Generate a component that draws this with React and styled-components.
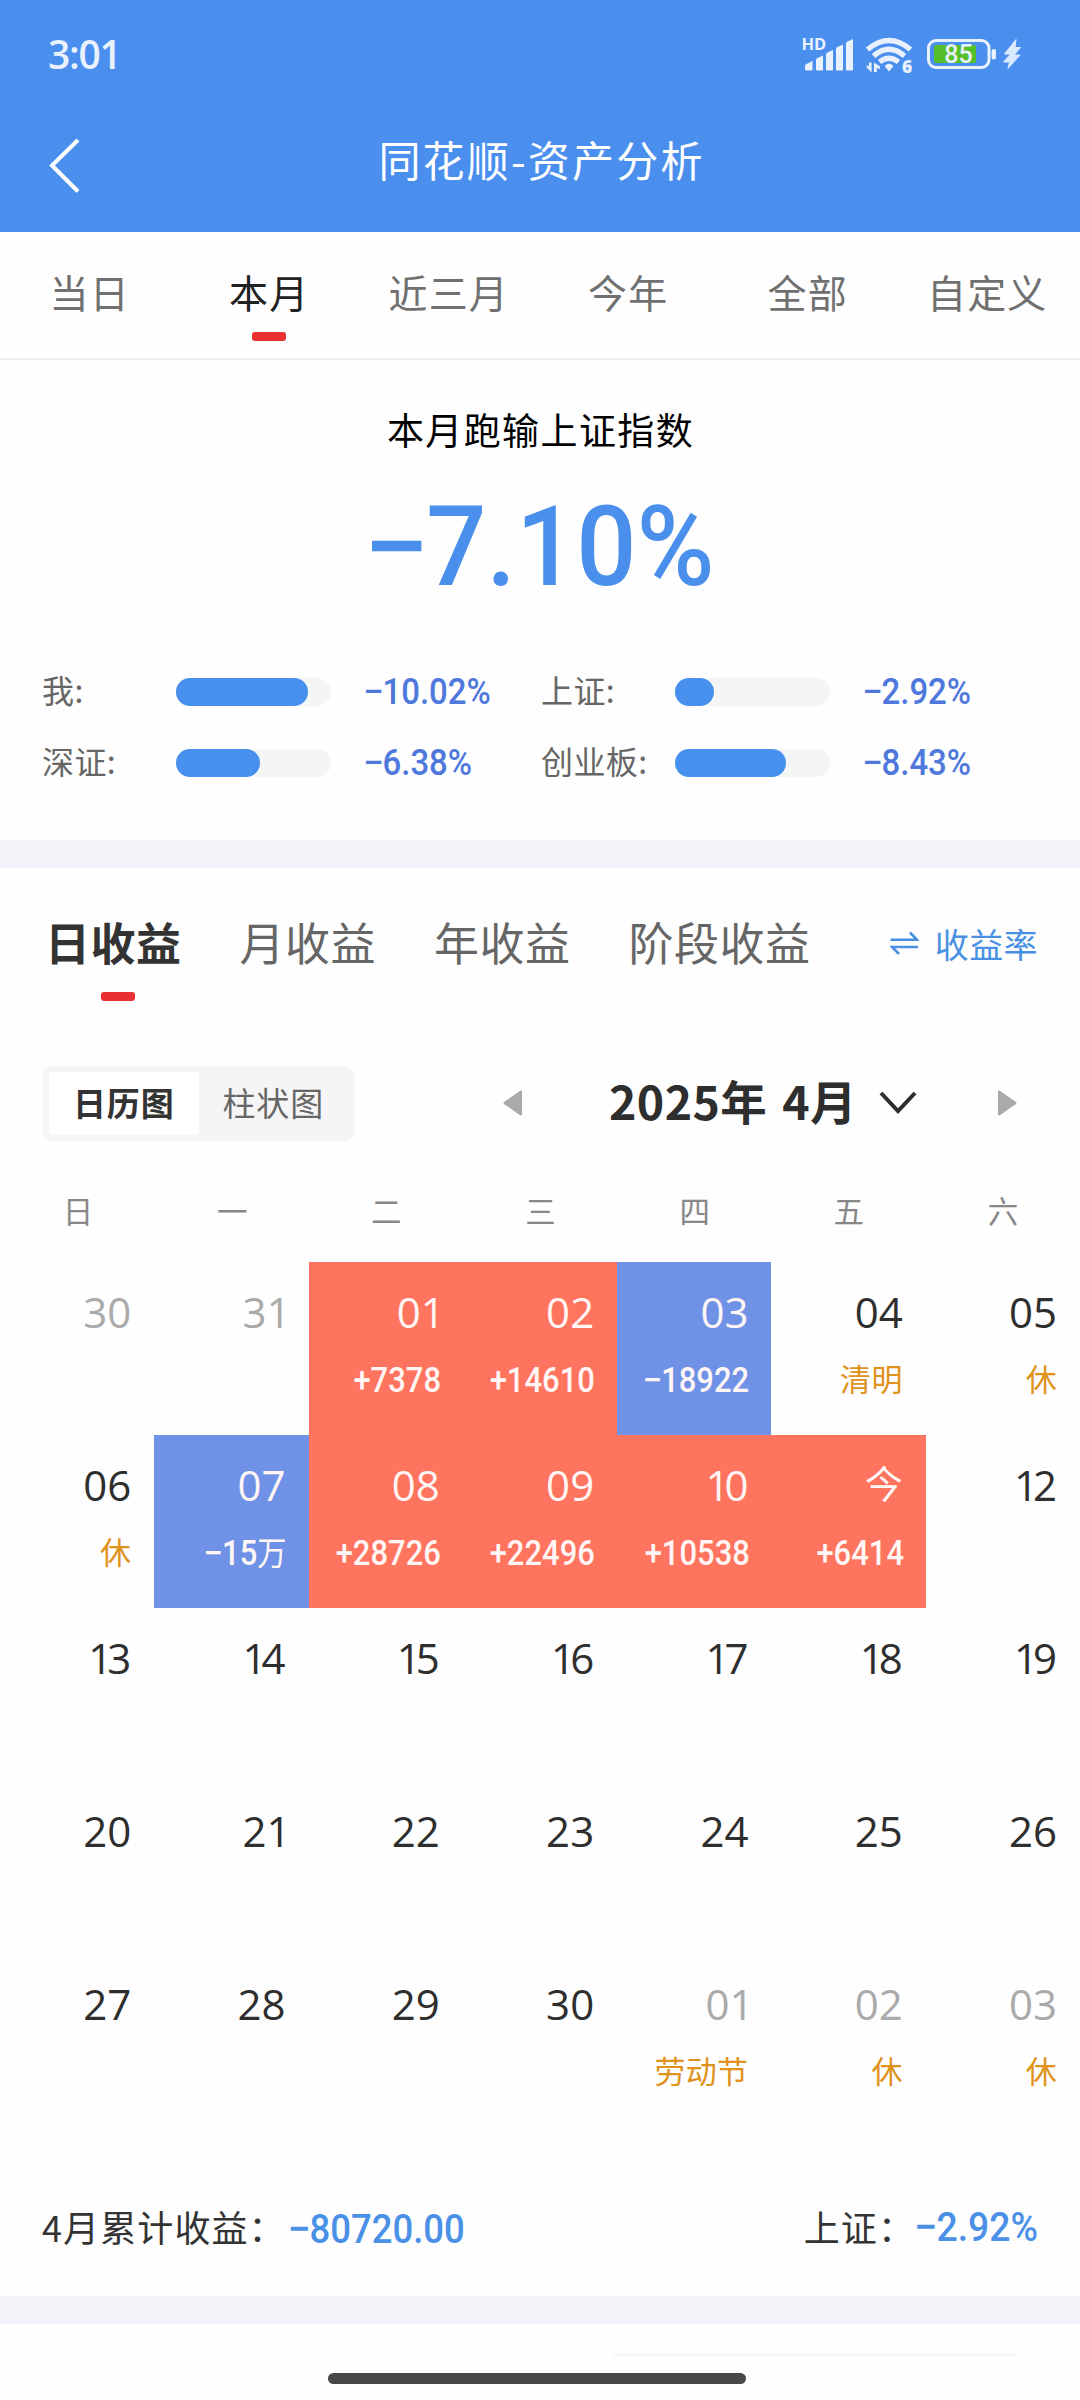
import React, { useState } from 'react';
import styled, { createGlobalStyle } from 'styled-components';

const RANGES = ['当日', '本月', '近三月', '今年', '全部', '自定义'];

const COMPARE = [
  { label: '我:', value: '−10.02%', fill: 132 },
  { label: '上证:', value: '−2.92%', fill: 39 },
  { label: '深证:', value: '−6.38%', fill: 84 },
  { label: '创业板:', value: '−8.43%', fill: 111 },
];

const PROFIT_TABS = ['日收益', '月收益', '年收益', '阶段收益'];
const WEEKDAYS = ['日', '一', '二', '三', '四', '五', '六'];

const DAYS = [
  { day: '30', muted: true },
  { day: '31', muted: true },
  { day: '01', profit: '+7378' },
  { day: '02', profit: '+14610' },
  { day: '03', profit: '−18922' },
  { day: '04', holiday: '清明' },
  { day: '05', holiday: '休' },
  { day: '06', holiday: '休' },
  { day: '07', profit: '−15', unit: '万' },
  { day: '08', profit: '+28726' },
  { day: '09', profit: '+22496' },
  { day: '10', profit: '+10538' },
  { day: '今', profit: '+6414', today: true },
  { day: '12' },
  { day: '13' },
  { day: '14' },
  { day: '15' },
  { day: '16' },
  { day: '17' },
  { day: '18' },
  { day: '19' },
  { day: '20' },
  { day: '21' },
  { day: '22' },
  { day: '23' },
  { day: '24' },
  { day: '25' },
  { day: '26' },
  { day: '27' },
  { day: '28' },
  { day: '29' },
  { day: '30' },
  { day: '01', muted: true, holiday: '劳动节' },
  { day: '02', muted: true, holiday: '休' },
  { day: '03', muted: true, holiday: '休' },
];

function StatusIcons() {
  return (
    <svg width="224" height="60" viewBox="800 26 224 60" fill="#e8f1fd">
      <text x="801.5" y="50" fontFamily="Open Sans, sans-serif" fontWeight="700" fontSize="16.5">HD</text>
      {/* SIGNAL */}
      <path d="M805 66 Q805 64.500 806.500 64 L812.500 61 V69.500 Q812.500 70.500 811.500 70.500 H806 Q805 70.500 805 69.500 Z" />
      <path d="M816 60 Q816 58.500 817.500 58 L823 55.500 V69.500 Q823 70.500 822 70.500 H817 Q816 70.500 816 69.500 Z" />
      <path d="M826 54.500 Q826 53 827.500 52.500 L833 50 V69.500 Q833 70.500 832 70.500 H827 Q826 70.500 826 69.500 Z" />
      <path d="M836 49 Q836 47.500 837.500 47 L843 44.500 V69.500 Q843 70.500 842 70.500 H837 Q836 70.500 836 69.500 Z" />
      <path d="M846 43.500 Q846 42 847.500 41.500 L853 39 V69.500 Q853 70.500 852 70.500 H847 Q846 70.500 846 69.500 Z" />
      {/* WIFI */}
      <g fill="none" stroke="#e8f1fd" strokeWidth="5.200">
        <path d="M867.500 49.500 Q889 31.500 910.500 49.500" />
        <path d="M873.500 56 Q889 42.500 904.500 56" />
        <path d="M879.500 62 Q889 54.500 898.500 62" />
      </g>
      <path d="M884.500 66 Q889 61.500 893.500 66 L889 71.500 Z" />
      <path d="M869 62.500 h2.600 v10 l-5 -5 v-2.500 l2.400 1.500 z" />
      <path d="M874 72 v-9.500 l6 4 v2.500 l-3.200 -1 v4 z" />
      <text x="902" y="72.500" fontFamily="Open Sans, sans-serif" fontWeight="800" fontSize="17.5">6</text>
      {/* BATTERY */}
      <rect x="928.500" y="40.500" width="60.500" height="27" rx="7.500" fill="none" stroke="#e8f1fd" strokeWidth="3" />
      <rect x="934" y="45" width="42" height="18" rx="2" fill="#55bf2b" />
      <rect x="991.600" y="49" width="4.400" height="10.500" rx="2" />
      <text x="958.500" y="63" textAnchor="middle" fontFamily="Roboto, sans-serif" fontWeight="500" fontSize="25">85</text>
      <path
        d="M1016 39.500 L1004.500 54 H1010.500 L1003.500 62 H1009.500 L1008 68.500 L1020 55 H1014 L1020.500 47.500 H1015 Z"
        fill="#d9e9ff"
        stroke="#d9e9ff"
        strokeWidth="1"
      />
    </svg>
  );
}

// SPLITS THE LEADING MINUS OFF SO IT CAN BE DRAWN WIDER THAN THE DIGITS
function Figure({ text }) {
  if (text[0] !== '−') return text;
  return (
    <>
      <Minus>−</Minus>
      {text.slice(1)}
    </>
  );
}

function App() {
  const [range, setRange] = useState('本月');
  const [tab, setTab] = useState('日收益');

  return (
    <>
      <GlobalStyle />
      <Phone>
        <Header>
          <StatusBar>
            <Clock>3:01</Clock>
            <StatusIcons />
          </StatusBar>
          <TitleBar>
            <BackButton>
              <svg width="32" height="56" viewBox="0 0 32 56" fill="none" stroke="#fff" strokeWidth="4">
                <path d="M30 2 L4 27.500 L30 53.500" />
              </svg>
            </BackButton>
            <Title>同花顺-资产分析</Title>
          </TitleBar>
        </Header>

        <RangeTabs>
          {RANGES.map((name) => (
            <RangeTab key={name} $active={name === range} onClick={() => setRange(name)}>
              {name}
            </RangeTab>
          ))}
        </RangeTabs>

        <Summary>
          <SummaryTitle>本月跑输上证指数</SummaryTitle>
          <SummaryValue>
            <Figure text="−7.10%" />
          </SummaryValue>
          <CompareGrid>
            {COMPARE.map((item) => (
              <CompareItem key={item.label}>
                <CompareLabel>{item.label}</CompareLabel>
                <Track>
                  <Fill style={{ width: item.fill }} />
                </Track>
                <CompareValue>
                  <Figure text={item.value} />
                </CompareValue>
              </CompareItem>
            ))}
          </CompareGrid>
        </Summary>

        <Divider />

        <ProfitTabs>
          {PROFIT_TABS.map((name) => (
            <ProfitTab key={name} $active={name === tab} onClick={() => setTab(name)}>
              {name}
            </ProfitTab>
          ))}
          <RateSwitch>
            <svg width="29" height="24" viewBox="0 0 29 24" fill="none" stroke="#4a90e2" strokeWidth="2.600">
              <path d="M0.500 8.800 H27 L20 1.500" />
              <path d="M28 16 H2 L9 23" />
            </svg>
            收益率
          </RateSwitch>
        </ProfitTabs>

        <Toolbar>
          <ChartToggle>
            <ToggleOption $active>日历图</ToggleOption>
            <ToggleOption>柱状图</ToggleOption>
          </ChartToggle>
          <MonthPicker>
            <svg width="19" height="26" viewBox="0 0 19 26">
              <path d="M17.500 0.500 Q19 0 19 2 V24 Q19 26 17.500 25.500 L1 14 Q0 13 1 12 Z" fill="#aaa" />
            </svg>
            <Month>
              <MonthText>2025年 4月</MonthText>
              <svg width="38" height="24" viewBox="0 0 38 24" fill="none" stroke="#2e2e2e" strokeWidth="4">
                <path d="M2 2 L19 20 L36 2" />
              </svg>
            </Month>
            <svg width="19" height="26" viewBox="0 0 19 26">
              <path d="M1.500 0.500 Q0 0 0 2 V24 Q0 26 1.500 25.500 L18 14 Q19 13 18 12 Z" fill="#aaa" />
            </svg>
          </MonthPicker>
        </Toolbar>

        <Weekdays>
          {WEEKDAYS.map((name) => (
            <span key={name}>{name}</span>
          ))}
        </Weekdays>

        <Calendar>
          {DAYS.map((item, i) => (
            <Day key={i} $profit={item.profit} $muted={item.muted}>
              <DayNumber $today={item.today}>
                {item.day.split('').map((c, n) => (c === '1' ? <One key={n}>1</One> : c))}
              </DayNumber>
              {item.profit && (
                <Profit>
                  <Figure text={item.profit} />
                  {item.unit && <Unit>{item.unit}</Unit>}
                </Profit>
              )}
              {item.holiday && <Holiday>{item.holiday}</Holiday>}
            </Day>
          ))}
        </Calendar>

        <Totals>
          <TotalLabel>4月累计收益：</TotalLabel>
          <TotalValue>
            <Figure text="−80720.00" />
          </TotalValue>
          <Spacer />
          <TotalLabel>上证：</TotalLabel>
          <TotalValue $right>
            <Figure text="−2.92%" />
          </TotalValue>
        </Totals>

        <Divider />

        <BottomArea>
          <NextToggle />
          <HomeBar />
        </BottomArea>
      </Phone>
    </>
  );
}

const GlobalStyle = createGlobalStyle`
  * {
    box-sizing: border-box;
  }

  body {
    margin: 0;
    background: #fff;
    font-family: 'Noto Sans CJK SC', 'Noto Sans', sans-serif;
  }

  svg {
    display: block;
    flex: none;
  }
`;

const Phone = styled.div`
  width: 1080px;
  height: 2400px;
  overflow: hidden;
  background: #fefefe;
  color: #333;
`;

const Header = styled.header`
  height: 232px;
  background: #4a8fee;
  color: #fff;
`;

const StatusBar = styled.div`
  display: flex;
  align-items: center;
  justify-content: space-between;
  height: 112px;
  padding: 0 56px 0 48px;
`;

const Clock = styled.span`
  margin-top: -4px;
  font-family: 'Open Sans', sans-serif;
  font-size: 39px;
  font-weight: 600;
  letter-spacing: -1.3px;
  line-height: 48px;
  color: #e8f1fd;
`;

const TitleBar = styled.div`
  display: grid;
  grid-template-columns: 100px 1fr 100px;
  height: 120px;
`;

const BackButton = styled.div`
  padding: 26px 0 0 48px;
`;

const Title = styled.h1`
  margin: 0;
  padding: 15px 0 0 3px;
  text-align: center;
  font-size: 42px;
  font-weight: 400;
  letter-spacing: 2.2px;
  line-height: 64px;
`;

const RangeTabs = styled.nav`
  display: grid;
  grid-template-columns: repeat(6, 1fr);
  height: 128px;
  padding-right: 3px;
  border-bottom: 2px solid #f0f0f0;
`;

const RangeTab = styled.div`
  display: flex;
  flex-direction: column;
  align-items: center;
  padding-top: 29px;
  font-size: 39px;
  letter-spacing: 1.2px;
  line-height: 60px;
  color: ${(p) => (p.$active ? '#222' : '#707070')};

  &::after {
    content: '';
    width: 34px;
    height: 9px;
    margin-top: 11px;
    border-radius: 3px;
    background: ${(p) => (p.$active ? '#e83030' : 'transparent')};
  }
`;

const Summary = styled.section`
  height: 480px;
  padding: 41px 41px 0 42px;
`;

const SummaryTitle = styled.div`
  text-align: center;
  font-size: 37px;
  letter-spacing: 1.4px;
  line-height: 56px;
  color: #000;
`;

const Minus = styled.span`
  display: inline-block;
  transform: scaleX(1.12);
`;

const SummaryValue = styled.div`
  margin-top: 35px;
  text-align: center;
  font-family: Roboto, sans-serif;
  font-size: 111px;
  font-weight: 500;
  line-height: 110px;
  color: #4a8feb;
  transform: scaleX(0.955);
`;

const CompareGrid = styled.div`
  display: grid;
  grid-template-columns: 499px 1fr;
  grid-auto-rows: 71px;
  margin-top: 55px;
`;

const CompareItem = styled.div`
  display: flex;
  align-items: center;
  height: 70px;
`;

const CompareLabel = styled.span`
  width: 134px;
  margin-top: -6px;
  font-size: 32px;
  letter-spacing: 0.4px;
  line-height: 48px;
  white-space: nowrap;
  color: #666;
`;

const Track = styled.div`
  flex: none;
  width: 155px;
  height: 28px;
  border-radius: 14px;
  background: #f4f6f6;
`;

const Fill = styled.div`
  height: 28px;
  border-radius: 14px;
  background: #4790ee;
`;

const CompareValue = styled.span`
  margin-left: 33px;
  font-family: Roboto, sans-serif;
  font-size: 36px;
  font-weight: 500;
  line-height: 40px;
  color: #4f78dc;
  transform: scaleX(0.915);
  transform-origin: left;
`;

const Divider = styled.div`
  height: 28px;
  background: #f2f3f8;
`;

const ProfitTabs = styled.nav`
  display: flex;
  height: 159px;
  padding: 42px 43px 0 45px;
`;

const ProfitTab = styled.div`
  display: flex;
  flex-direction: column;
  align-items: center;
  margin-right: 58px;
  font-size: 45px;
  letter-spacing: 0.5px;
  line-height: 64px;
  white-space: nowrap;
  color: ${(p) => (p.$active ? '#333' : '#666')};
  font-weight: ${(p) => (p.$active ? 700 : 400)};

  &::after {
    content: '';
    width: 34px;
    height: 9px;
    margin: 18px 0 0 9px;
    border-radius: 3px;
    background: ${(p) => (p.$active ? '#e83030' : 'transparent')};
  }
`;

const RateSwitch = styled.div`
  display: flex;
  align-items: center;
  gap: 16px;
  height: 66px;
  margin: 0 -1px 0 auto;
  font-size: 34px;
  letter-spacing: 0.4px;
  white-space: nowrap;
  color: #4a90e2;
`;

const Toolbar = styled.div`
  display: flex;
  justify-content: space-between;
  align-items: center;
  height: 152px;
  padding: 0 63px 0 43px;
`;

const ChartToggle = styled.div`
  display: flex;
  width: 311px;
  height: 75px;
  padding: 6px;
  border-radius: 9px;
  background: #f5f5f5;
`;

const ToggleOption = styled.div`
  width: 150px;
  height: 63px;
  border-radius: 4px;
  text-align: center;
  font-size: 33px;
  letter-spacing: 0.8px;
  line-height: 60px;
  background: ${(p) => (p.$active ? '#fff' : 'transparent')};
  color: ${(p) => (p.$active ? '#333' : '#666')};
  font-weight: ${(p) => (p.$active ? 700 : 400)};
`;

const MonthPicker = styled.div`
  display: flex;
  align-items: center;
  justify-content: space-between;
  width: 514px;
`;

const Month = styled.div`
  display: flex;
  align-items: center;
  gap: 22px;
  margin-left: 6px;
`;

const MonthText = styled.span`
  margin-top: -6px;
  font-size: 46.5px;
  font-weight: 700;
  letter-spacing: 0.4px;
  word-spacing: 4px;
  line-height: 64px;
  white-space: pre;
  color: #2e2e2e;
`;

const Weekdays = styled.div`
  display: grid;
  grid-template-columns: repeat(7, 1fr);
  height: 83px;
  padding: 7px 0 0 1px;
  text-align: center;
  font-size: 30.5px;
  line-height: 48px;
  color: #888;
`;

const Calendar = styled.div`
  display: grid;
  grid-template-columns: repeat(7, 1fr);
  grid-auto-rows: 173px;
`;

const Day = styled.div`
  display: flex;
  flex-direction: column;
  align-items: flex-end;
  padding: 24px 23px 0 0;
  background: ${(p) => (!p.$profit ? 'transparent' : p.$profit[0] === '+' ? '#ff745f' : '#6f92e6')};
  color: ${(p) => (p.$profit ? '#fff6f5' : p.$muted ? '#aaa' : '#2e2e2e')};
`;

const DayNumber = styled.span`
  height: 51px;
  font-family: 'Open Sans', 'Noto Sans CJK SC', sans-serif;
  font-size: ${(p) => (p.$today ? 38 : 42)}px;
  line-height: ${(p) => (p.$today ? 48 : 51)}px;
`;

const One = styled.span`
  letter-spacing: -5px;
`;

const Profit = styled.span`
  margin: 24px -1px 0 0;
  font-family: Roboto, 'Noto Sans CJK SC', sans-serif;
  font-size: 35px;
  font-weight: 500;
  line-height: 40px;
  transform: scaleX(0.885);
  transform-origin: right;
`;

const Unit = styled.span`
  font-size: 33px;
  font-weight: 400;
`;

const Holiday = styled.span`
  margin-top: 19px;
  font-size: 31px;
  letter-spacing: 0.3px;
  line-height: 44px;
  color: #df921c;
`;

const Totals = styled.div`
  display: flex;
  align-items: center;
  height: 169px;
  padding: 29px 42px 0 42px;
`;

const TotalLabel = styled.span`
  font-size: 36px;
  letter-spacing: 1.1px;
  line-height: 52px;
`;

const TotalValue = styled.span`
  display: flex;
  justify-content: ${(p) => (p.$right ? 'flex-end' : 'flex-start')};
  width: ${(p) => (p.$right ? 123 : 180)}px;
  margin: ${(p) => (p.$right ? '1px 0 0' : '5px 0 0 3px')};
  font-family: Roboto, sans-serif;
  font-size: 41px;
  font-weight: 500;
  line-height: 52px;
  color: #4a90e6;
  transform: scaleX(${(p) => (p.$right ? 0.91 : 0.89)});
  transform-origin: ${(p) => (p.$right ? 'right' : 'left')};
`;

const Spacer = styled.div`
  flex: 1;
`;

const BottomArea = styled.div`
  display: flex;
  flex-direction: column;
  height: 76px;
  padding-top: 29px;
`;

const NextToggle = styled.div`
  width: 405px;
  height: 3px;
  margin-left: 613px;
  border-radius: 3px 3px 0 0;
  background: #f5f5f5;
`;

const HomeBar = styled.div`
  width: 418px;
  height: 11px;
  margin: 17px 0 0 328px;
  border-radius: 6px;
  background: #484848;
`;

export default App;
